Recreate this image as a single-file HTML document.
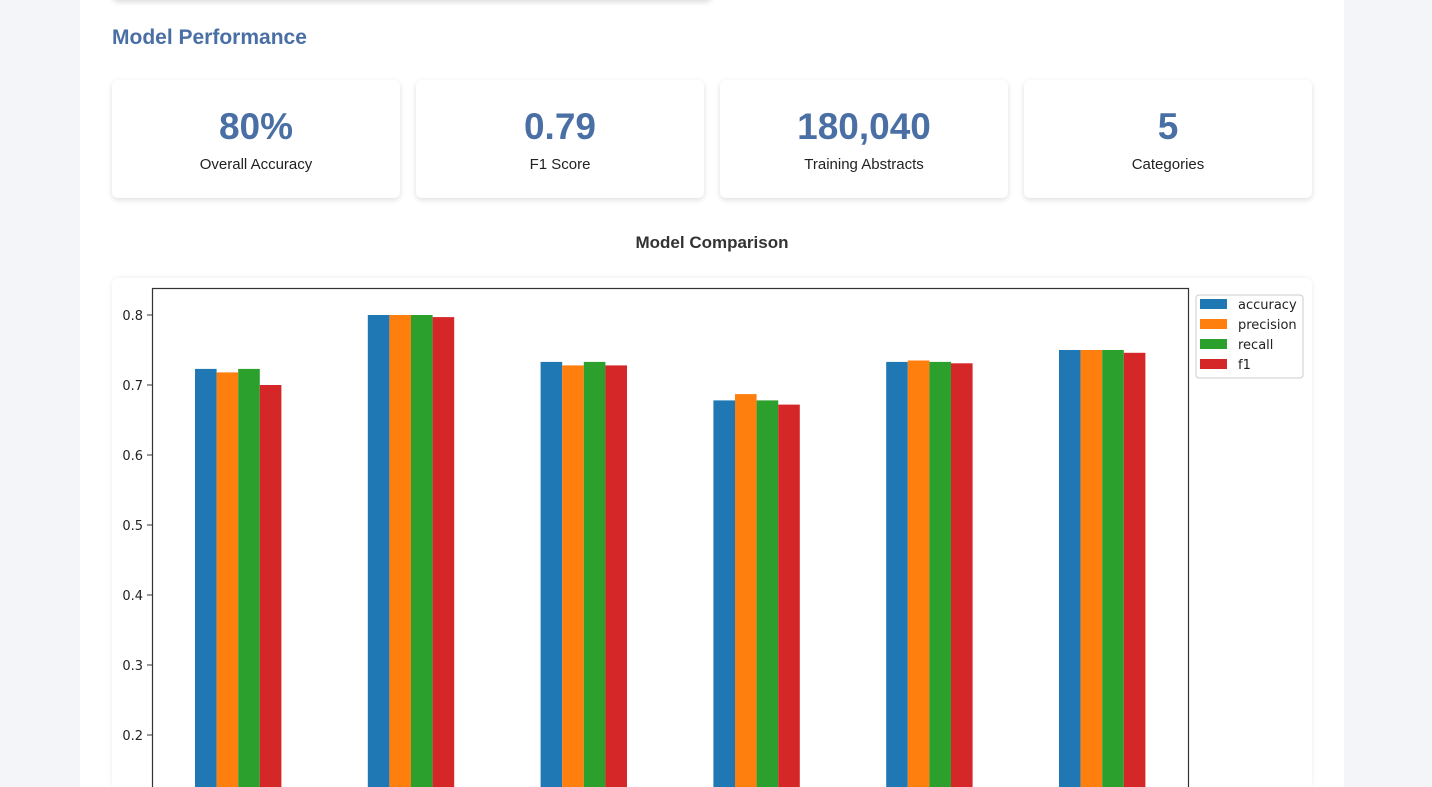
<!DOCTYPE html>
<html><head><style>
html,body{margin:0;width:1432px;height:787px;overflow:hidden;}
body{position:relative;background:#f3f5f8;font-family:"Liberation Sans",sans-serif;}
.main{position:absolute;left:80px;top:0;width:1264px;height:787px;background:#fff;}
.topcard{position:absolute;left:112px;top:-40px;width:600px;height:40px;background:#fff;border-radius:6px;box-shadow:0 2px 6px rgba(0,0,0,.15);}
h2{position:absolute;left:112px;top:26px;margin:0;font-size:21px;font-weight:bold;color:#4a6fa5;}
.card{position:absolute;top:80px;width:288px;height:118px;background:#fff;border-radius:6px;box-shadow:0 2px 6px rgba(0,0,0,.13);text-align:center;}
.card .v{margin-top:25px;font-size:37px;font-weight:bold;color:#4a6fa5;line-height:44px;}
.card .l{font-size:15px;color:#222;margin-top:7px}
.ct{position:absolute;left:0;width:1424px;top:233px;text-align:center;font-weight:bold;font-size:17px;color:#333}
.chart{position:absolute;left:112px;top:278px;width:1200px;height:509px;background:#fff;box-shadow:0 0 6px rgba(0,0,0,.08);border-radius:6px 6px 0 0}
</style></head><body>
<div class="main"></div>
<div class="topcard"></div>
<h2>Model Performance</h2>
<div class="card" style="left:112px"><div class="v">80%</div><div class="l">Overall Accuracy</div></div>
<div class="card" style="left:416px"><div class="v">0.79</div><div class="l">F1 Score</div></div>
<div class="card" style="left:720px"><div class="v">180,040</div><div class="l">Training Abstracts</div></div>
<div class="card" style="left:1024px"><div class="v">5</div><div class="l">Categories</div></div>
<div class="ct">Model Comparison</div>
<div class="chart"></div>
<svg style="position:absolute;left:0;top:0" width="1432" height="787" font-family="DejaVu Sans, sans-serif" font-size="13" fill="#222">
<g id="bars"></g>
<rect x="152.5" y="288.5" width="1036" height="600" fill="none" stroke="#333" stroke-width="1.2"/>
<g text-anchor="end">
<text x="143" y="320">0.8</text><line x1="147" x2="152" y1="315" y2="315" stroke="#333"/>
<text x="143" y="390">0.7</text><line x1="147" x2="152" y1="385" y2="385" stroke="#333"/>
<text x="143" y="460">0.6</text><line x1="147" x2="152" y1="455" y2="455" stroke="#333"/>
<text x="143" y="530">0.5</text><line x1="147" x2="152" y1="525" y2="525" stroke="#333"/>
<text x="143" y="600">0.4</text><line x1="147" x2="152" y1="595" y2="595" stroke="#333"/>
<text x="143" y="670">0.3</text><line x1="147" x2="152" y1="665" y2="665" stroke="#333"/>
<text x="143" y="740">0.2</text><line x1="147" x2="152" y1="735" y2="735" stroke="#333"/>
</g>
<rect x="1196" y="295" width="107" height="83" rx="3" fill="#fff" stroke="#ccc"/>
<rect x="1200" y="299" width="27" height="10" fill="#1f77b4"/><text x="1238" y="309">accuracy</text>
<rect x="1200" y="319" width="27" height="10" fill="#ff7f0e"/><text x="1238" y="329">precision</text>
<rect x="1200" y="339" width="27" height="10" fill="#2ca02c"/><text x="1238" y="349">recall</text>
<rect x="1200" y="359" width="27" height="10" fill="#d62728"/><text x="1238" y="369">f1</text>
</svg>
<script>
var d=[[.723,.718,.723,.700],[.800,.800,.800,.797],[.733,.728,.733,.728],[.678,.687,.678,.672],[.733,.735,.733,.731],[.750,.750,.750,.746]];
var c=["#1f77b4","#ff7f0e","#2ca02c","#d62728"],s="";
d.forEach(function(g,i){g.forEach(function(v,j){var x=195+i*172.8+j*21.6,y=315+(0.8-v)*700;
s+='<rect x="'+x+'" y="'+y+'" width="21.6" height="'+(787-y)+'" fill="'+c[j]+'"/>';});});
document.getElementById("bars").innerHTML=s;
</script>
</body></html>
